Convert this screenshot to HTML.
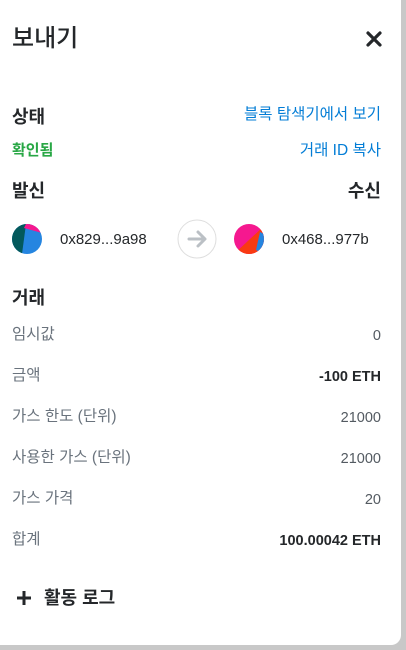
<!DOCTYPE html>
<html><head><meta charset="utf-8"><style>
html,body{margin:0;padding:0;width:406px;height:650px;overflow:hidden;background:#c8c8c8;font-family:"Liberation Sans","Noto Sans CJK KR",sans-serif;}
.panel{position:absolute;left:0;top:0;width:401px;height:645px;background:#fff;border-radius:0 0 10px 0;}
.t{position:absolute;white-space:nowrap;line-height:1;}
.r{right:20px;text-align:right;}
.h{font-size:18px;font-weight:bold;color:#24272a;}
.lab{font-size:15.5px;color:#6a737d;left:12px;}
.val{font-size:14.5px;color:#535a61;}
.link{font-size:15.5px;color:#037dd6;}
</style></head><body>
<div class="panel">
<div class="t" style="left:12px;top:27px;font-size:24px;color:#24272a;font-weight:500">보내기</div>
<svg style="position:absolute;left:366px;top:31px" width="16" height="16" viewBox="0 0 16 16"><path d="M2 2L14 14M14 2L2 14" stroke="#24272a" stroke-width="3.2" stroke-linecap="round"/></svg>

<div class="t h" style="left:12px;top:108px">상태</div>
<div class="t link r" style="top:107px">블록 탐색기에서 보기</div>
<div class="t" style="left:12px;top:143px;font-size:15px;color:#28a745;font-weight:bold">확인됨</div>
<div class="t link r" style="top:143px">거래 ID 복사</div>

<div class="t h" style="left:12px;top:182px">발신</div>
<div class="t h r" style="top:182px">수신</div>

<svg style="position:absolute;left:12px;top:224px" width="30" height="30" viewBox="0 0 30 30"><defs><clipPath id="c1"><circle cx="15" cy="15" r="15"/></clipPath></defs><g clip-path="url(#c1)"><rect width="30" height="30" fill="#2585e0"/><path d="M0 0H14L10 30H0Z" fill="#03595c"/><path d="M14 0H30V9L12 4Z" fill="#f5188f"/></g></svg>
<div class="t" style="left:60px;top:232px;font-size:15px;color:#24272a">0x829...9a98</div>
<svg style="position:absolute;left:177px;top:219px" width="40" height="40" viewBox="0 0 40 40"><circle cx="20" cy="20" r="19" fill="#fff" stroke="#dedede" stroke-width="1"/><path d="M12 20H27M21 13L28 20L21 27" stroke="#bbc0c5" stroke-width="3" fill="none" stroke-linecap="round" stroke-linejoin="round"/></svg>
<svg style="position:absolute;left:234px;top:224px" width="30" height="30" viewBox="0 0 30 30"><defs><clipPath id="c2"><circle cx="15" cy="15" r="15"/></clipPath></defs><g clip-path="url(#c2)"><rect width="30" height="30" fill="#f5188f"/><path d="M30 2L0 30H30Z" fill="#f93a12"/><path d="M26 8L30 10V30L22 26Z" fill="#2585e0"/></g></svg>
<div class="t" style="left:282px;top:232px;font-size:15px;color:#24272a">0x468...977b</div>

<div class="t h" style="left:12px;top:289px">거래</div>
<div class="t lab" style="top:327px">임시값</div><div class="t val r" style="top:329px">0</div>
<div class="t lab" style="top:368px">금액</div><div class="t val r" style="top:370px;font-weight:bold;color:#24272a">-100 ETH</div>
<div class="t lab" style="top:409px">가스 한도 (단위)</div><div class="t val r" style="top:411px">21000</div>
<div class="t lab" style="top:450px">사용한 가스 (단위)</div><div class="t val r" style="top:452px">21000</div>
<div class="t lab" style="top:491px">가스 가격</div><div class="t val r" style="top:493px">20</div>
<div class="t lab" style="top:532px">합계</div><div class="t val r" style="top:534px;font-weight:bold;color:#24272a">100.00042 ETH</div>

<svg style="position:absolute;left:16px;top:590px" width="16" height="16" viewBox="0 0 16 16"><path d="M8 1V15M1 8H15" stroke="#24272a" stroke-width="3"/></svg>
<div class="t h" style="left:44px;top:589px">활동 로그</div>
</div>
</body></html>
